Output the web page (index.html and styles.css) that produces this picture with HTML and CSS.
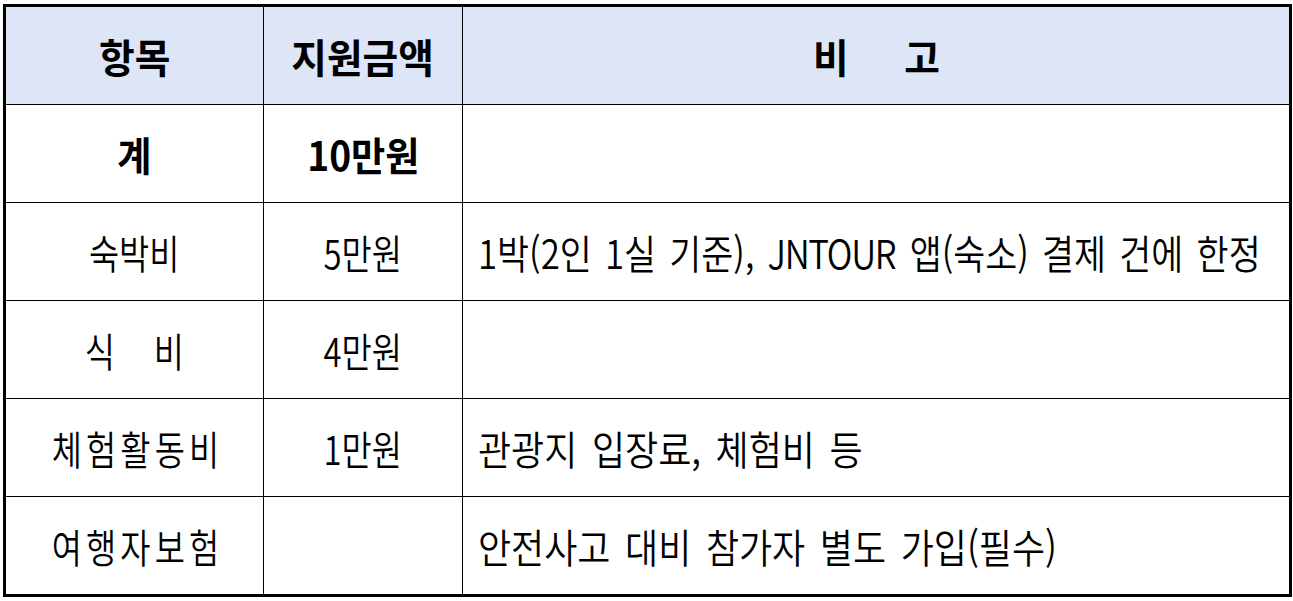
FILE: index.html
```html
<!DOCTYPE html>
<html lang="ko">
<head>
<meta charset="utf-8">
<link rel="stylesheet" href="styles.css">
</head>
<body>
<table class="grid">
  <colgroup>
    <col class="c1">
    <col class="c2">
    <col class="c3">
  </colgroup>
  <thead>
    <tr class="head">
      <th><span class="t">항목</span></th>
      <th><span class="t">지원금액</span></th>
      <th><span class="t wide">비 고</span></th>
    </tr>
  </thead>
  <tbody>
    <tr class="total">
      <td><span class="t">계</span></td>
      <td><span class="t">10만원</span></td>
      <td class="note"></td>
    </tr>
    <tr>
      <td><span class="t">숙박비</span></td>
      <td><span class="t">5만원</span></td>
      <td class="note"><span class="t tight">1박(2인 1실 기준), <span class="latin">JNTOUR</span> 앱(숙소) 결제 건에 한정</span></td>
    </tr>
    <tr>
      <td><span class="t wide-s">식 비</span></td>
      <td><span class="t">4만원</span></td>
      <td class="note"></td>
    </tr>
    <tr>
      <td><span class="t spread">체험활동비</span></td>
      <td><span class="t">1만원</span></td>
      <td class="note"><span class="t">관광지 입장료, 체험비 등</span></td>
    </tr>
    <tr>
      <td><span class="t spread">여행자보험</span></td>
      <td></td>
      <td class="note"><span class="t">안전사고 대비 참가자 별도 가입(필수)</span></td>
    </tr>
  </tbody>
</table>
</body>
</html>
```

FILE: styles.css
```css
html, body {
  margin: 0;
  background: #ffffff;
}
body {
  padding: 4px 4px 0 3px;
  font-family: "Noto Sans CJK KR", "Noto Sans", sans-serif;
  color: #000000;
}
.grid {
  border-collapse: collapse;
  table-layout: fixed;
  width: 1286px;
  border: 3px solid #000;
}
.c1 { width: 259px; }
.c2 { width: 199px; }
.c3 { width: 828px; }
.grid th, .grid td {
  border: 1px solid #000;
  height: 97px;
  padding: 0;
  text-align: center;
  vertical-align: middle;
  font-size: 40px;
  line-height: 1;
  font-weight: 350;
  overflow: hidden;
}
.grid .t {
  display: inline-block;
  white-space: nowrap;
  transform: scaleX(0.82);
  transform-origin: 50% 50%;
}
.grid .spread {
  letter-spacing: 5px;
  margin-right: -5px;
}
.grid .head th {
  background: #dee5f6;
  font-weight: 700;
}
.grid .head .t {
  transform: scaleX(0.97);
}
.grid .total td {
  font-weight: 700;
}
.grid .total .t {
  transform: scaleX(0.93);
}
.grid .wide {
  word-spacing: 46px;
}
.grid .wide-s {
  word-spacing: 36px;
}
.grid td.note {
  text-align: left;
  padding-left: 15px;
}
.grid td.note .t {
  transform: scaleX(0.9);
  transform-origin: 0 50%;
  word-spacing: 5px;
}
.grid td.note .tight {
  transform: scaleX(0.87);
  word-spacing: 4px;
}
.grid .latin {
  letter-spacing: -1.5px;
  margin-right: 1.5px;
}
```
